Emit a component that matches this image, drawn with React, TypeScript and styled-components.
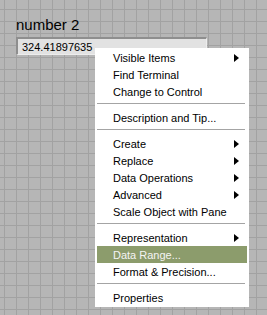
import styled, { createGlobalStyle } from "styled-components";

const GlobalStyle = createGlobalStyle`
  html, body {
    margin: 0;
    padding: 0;
    background: #b5b5b5;
  }
`;

const Panel = styled.div`
  position: relative;
  width: 267px;
  height: 315px;
  overflow: hidden;
  box-sizing: border-box;
  padding: 16px 0 0 16px;
  background-color: #b6b6b6;
  background-image: linear-gradient(to right, #a2a2a2 1px, transparent 1px),
    linear-gradient(to bottom, #a2a2a2 1px, transparent 1px);
  background-size: 12px 12px;
  background-position: 4px 9px;
  font-family: "Liberation Sans", Arial, sans-serif;
`;

const Control = styled.div`
  display: flex;
  flex-direction: column;
  gap: 3px;
  width: 191px;
`;

const Label = styled.div`
  font-size: 15px;
  line-height: 18px;
  color: #000;
`;

const NumBox = styled.div`
  box-sizing: border-box;
  height: 18px;
  padding-left: 4px;
  display: flex;
  align-items: center;
  font-size: 11px;
  color: #000;
  background: #e2e2e2;
  border-top: 2px solid #8e8e8e;
  border-left: 2px solid #8e8e8e;
  border-right: 1px solid #ededed;
  border-bottom: 1px solid #ededed;
`;

const Menu = styled.div`
  position: absolute;
  left: 95px;
  top: 48px;
  width: 154px;
  box-sizing: border-box;
  padding: 1px 2px;
  background: #fff;
  font-size: 11px;
`;

const Item = styled.div<{ $active?: boolean }>`
  height: 17px;
  display: flex;
  align-items: center;
  justify-content: space-between;
  padding: 0 8px 0 16px;
  color: ${(p) => (p.$active ? "#f4f4f4" : "#000")};
  background: ${(p) => (p.$active ? "#8c9c6c" : "transparent")};
  white-space: nowrap;
`;

const Arrow = styled.span`
  width: 0;
  height: 0;
  border-left: 5px solid #000;
  border-top: 4.5px solid transparent;
  border-bottom: 4.5px solid transparent;
`;

const Separator = styled.div`
  height: 9px;
  box-sizing: border-box;
  padding-top: 3px;
  margin-right: 2px;

  &::after {
    content: "";
    display: block;
    border-top: 1px solid #a4a4a4;
    border-bottom: 1px solid #fff;
  }
`;

type Entry = { label: string; sub?: boolean; active?: boolean } | "sep";

const entries: Entry[] = [
  { label: "Visible Items", sub: true },
  { label: "Find Terminal" },
  { label: "Change to Control" },
  "sep",
  { label: "Description and Tip..." },
  "sep",
  { label: "Create", sub: true },
  { label: "Replace", sub: true },
  { label: "Data Operations", sub: true },
  { label: "Advanced", sub: true },
  { label: "Scale Object with Pane" },
  "sep",
  { label: "Representation", sub: true },
  { label: "Data Range...", active: true },
  { label: "Format & Precision..." },
  "sep",
  { label: "Properties" },
];

export default function App() {
  return (
    <>
      <GlobalStyle />
      <Panel>
        <Control>
          <Label>number 2</Label>
          <NumBox>324.41897635</NumBox>
        </Control>
        <Menu>
          {entries.map((e, i) =>
            e === "sep" ? (
              <Separator key={i} />
            ) : (
              <Item key={i} $active={e.active}>
                <span>{e.label}</span>
                {e.sub && <Arrow />}
              </Item>
            )
          )}
        </Menu>
      </Panel>
    </>
  );
}
